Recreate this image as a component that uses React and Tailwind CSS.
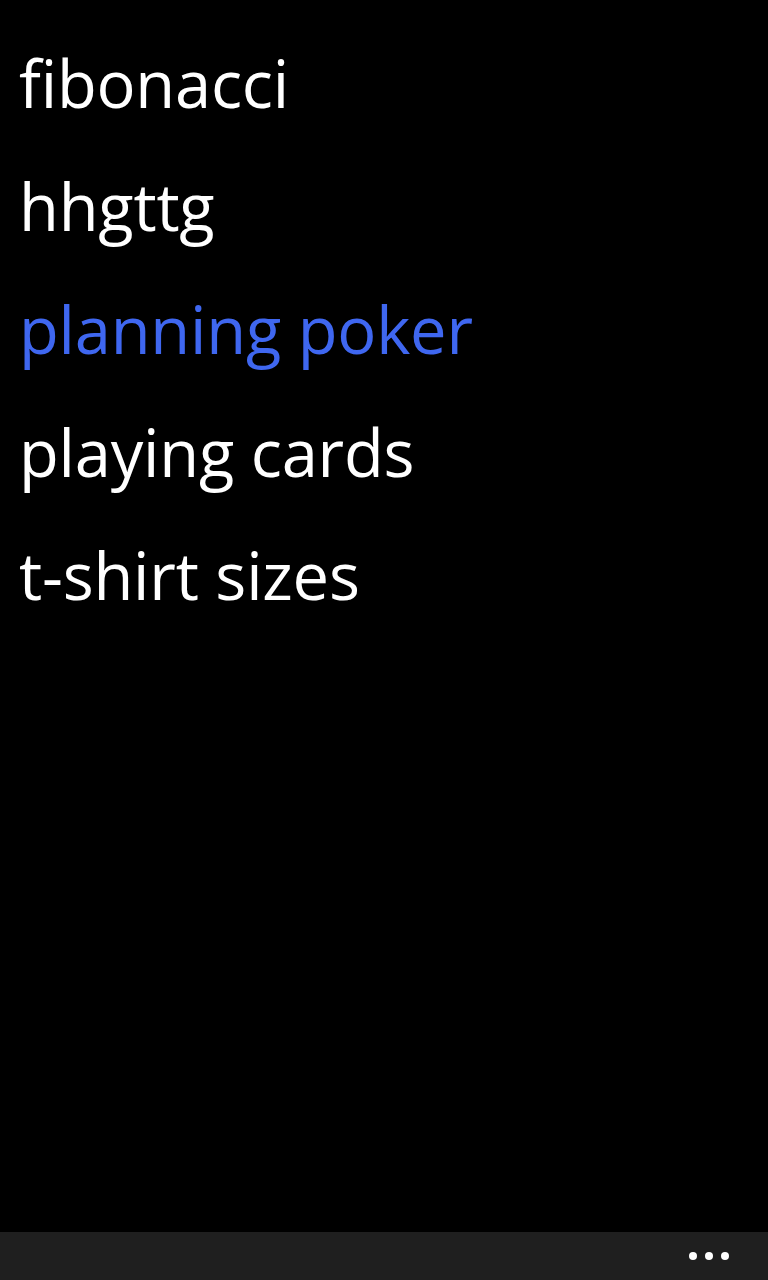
const ITEMS = ['fibonacci', 'hhgttg', 'planning poker', 'playing cards', 't-shirt sizes']
const SELECTED = 'planning poker'

export default function App() {
  return (
    <div className="h-[1280px] w-[768px] bg-black flex flex-col overflow-hidden" style={{ fontFamily: '"Open Sans", "Noto Sans", sans-serif' }}>
      {/* deck list */}
      <div className="flex-1 flex flex-col pt-[38px] pl-[19px]">
        {ITEMS.map(name => (
          <div key={name}
            className={`h-[123px] text-[65px] leading-[90px] tracking-[-0.2px] ${name === SELECTED ? 'text-[#3f67f0]' : 'text-white'}`}>
            {name}
          </div>
        ))}
      </div>

      {/* app bar */}
      <div className="h-[48px] bg-[#1f1f1f] flex items-center justify-end pr-[39px] gap-[8px]">
        <span className="w-[8px] h-[8px] rounded-full bg-white" />
        <span className="w-[8px] h-[8px] rounded-full bg-white" />
        <span className="w-[8px] h-[8px] rounded-full bg-white" />
      </div>
    </div>
  )
}
